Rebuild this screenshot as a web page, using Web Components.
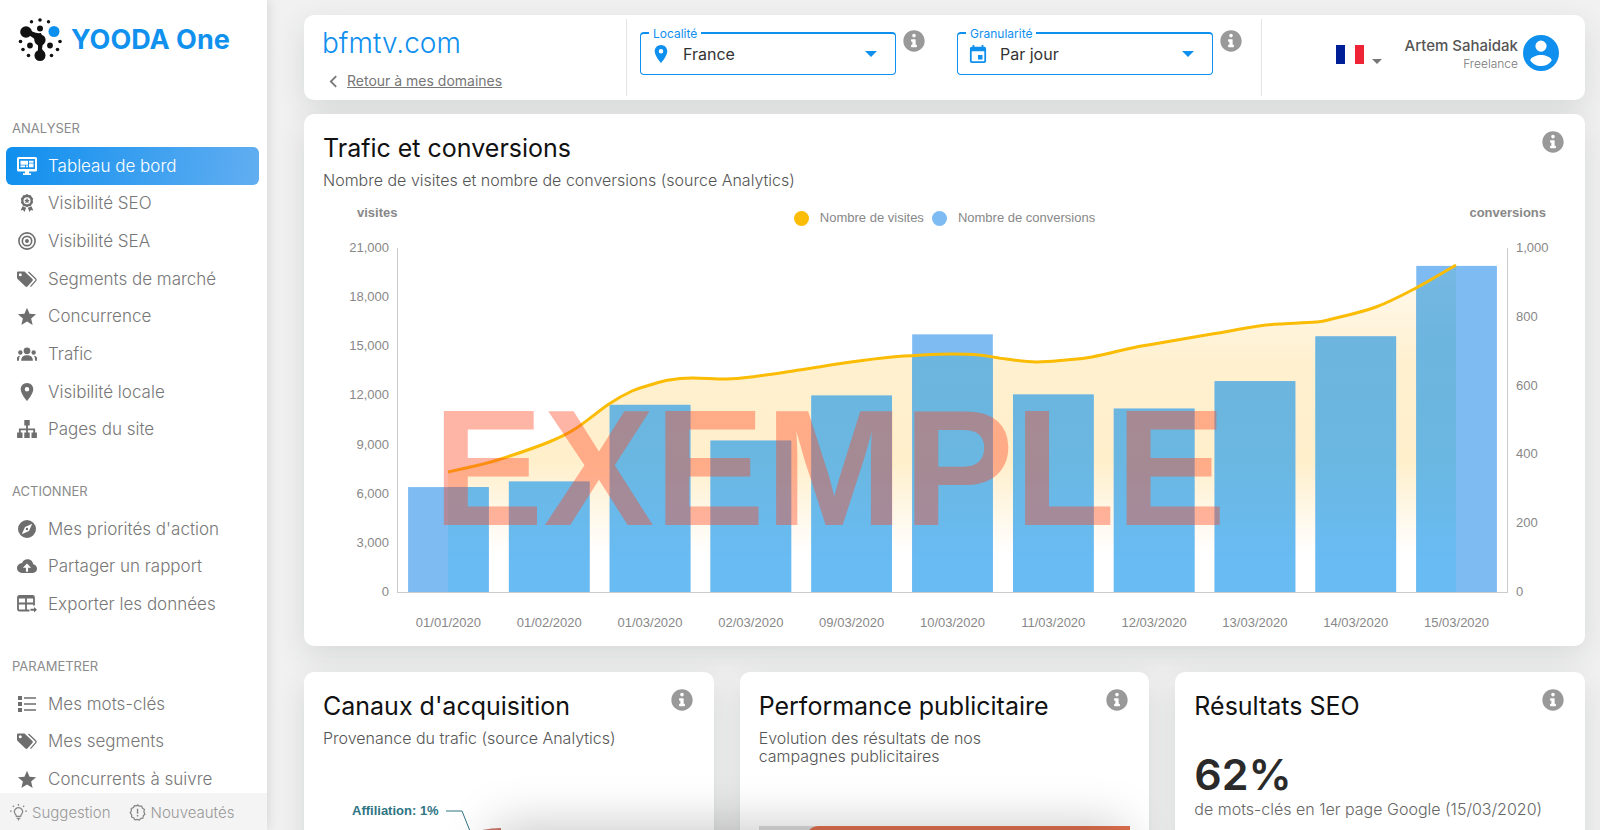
<!DOCTYPE html>
<html lang="fr">
<head>
<meta charset="utf-8">
<title>YOODA One</title>
<style>
html, body { margin: 0; height: 100%; }
body { font-family: Inter, "Open Sans", sans-serif; color: #555; background: #f1f1f1; --blue: #0f8fee; --num: "Liberation Sans", Arial, sans-serif; }
</style>
</head>
<body>
<yooda-app>
  <yooda-sidebar slot="side"></yooda-sidebar>
  <yooda-topbar></yooda-topbar>
  <yooda-card heading="Trafic et conversions" sub="Nombre de visites et nombre de conversions (source Analytics)" class="wide">
    <yooda-combo-chart></yooda-combo-chart>
  </yooda-card>
  <yooda-columns>
    <yooda-card heading="Canaux d'acquisition" sub="Provenance du trafic (source Analytics)"><yooda-pie></yooda-pie></yooda-card>
    <yooda-card heading="Performance publicitaire" sub="Evolution des résultats de nos campagnes publicitaires"><yooda-funnel></yooda-funnel></yooda-card>
    <yooda-card heading="Résultats SEO"><yooda-score value="62%">de mots-clés en 1er page Google (15/03/2020)</yooda-score></yooda-card>
  </yooda-columns>
</yooda-app>

<script>
const ICONS = {
  info: ['0 0 512 512', '<path d="M256 8C119 8 8 119 8 256s111 248 248 248 248-111 248-248S393 8 256 8zm0 80c23 0 42 19 42 42s-19 42-42 42-42-19-42-42 19-42 42-42zm68 300c0 7-5 12-12 12H200c-7 0-12-5-12-12v-32c0-7 5-12 12-12h18v-72h-18c-7 0-12-5-12-12v-32c0-7 5-12 12-12h82c7 0 12 5 12 12v116h18c7 0 12 5 12 12z"/>'],
  board: ['0 0 20 18', '<path fill-rule="evenodd" d="M1.500 0h17q1.500 0 1.500 1.500v11.500q0 1.500-1.500 1.500H12v1.700h2V18H6v-1.800h2V14.500H1.500Q0 14.500 0 13V1.500Q0 0 1.500 0zM2 2v10h16V2z"/><path d="M3.500 3.800h7.500v3.900H3.500zM12 3.800h4.500v2H12zM12 6.500h4.500V10.300H12zM3.500 8.500H8V10.300H3.500zM9 8.500h2V10.300H9z"/>'],
  award: ['0 0 18 20', '<path fill-rule="evenodd" d="M9 0l2 1.100 2.300.2.900 2.100 1.600 1.700-.5 2.300.5 2.200-1.600 1.700-.9 2-2.300.3L9 14.700l-2-1.100-2.300-.3-.9-2L2.200 9.600l.5-2.200-.5-2.300 1.600-1.700.9-2.100L7 1.100zM9 3.500a3.900 3.900 0 1 0 0 7.800 3.900 3.900 0 0 0 0-7.800z"/><path d="M9 4.300l.9 2 2.200.3-1.600 1.500.4 2.200L9 9.200l-1.900 1.100.4-2.200-1.600-1.500 2.200-.3zM4 13.500l4 1.700L6.300 20l-1.700-2.200-2.600.4zM14 13.500l-4 1.700 1.700 4.800 1.700-2.200 2.600.4z"/>'],
  target: ['0 0 20 20', '<g fill="none" stroke="currentColor" stroke-width="1.800"><circle cx="10" cy="10" r="9"/><circle cx="10" cy="10" r="5.200"/></g><circle cx="10" cy="10" r="2.200"/>'],
  tags: ['0 0 20 18', '<path fill-rule="evenodd" d="M0 2.500Q0 1.500 1 1.500h6.500L15.500 9q.8 1-.1 2l-5 5.500q-.9.900-1.900 0L.6 9Q0 8.400 0 7.500zM3.300 3.200a1.500 1.500 0 1 0 0 3 1.500 1.500 0 0 0 0-3z"/><path fill="none" stroke="currentColor" stroke-width="1.200" d="M11.500 2l7.300 7q.6.900 0 1.600l-5.300 6"/>'],
  star: ['2 1 20 21', '<path d="M12 1.800l3 7 7.600.7-5.800 5 1.800 7.500L12 18l-6.600 4 1.800-7.500-5.800-5 7.600-.7z"/>'],
  people: ['1 0 22 16', '<circle cx="12" cy="4.500" r="3.700"/><circle cx="4.700" cy="6.300" r="2.400"/><circle cx="19.300" cy="6.300" r="2.400"/><path d="M5.500 15.500q.2-6 6.500-6t6.500 6zM0 15.500q0-5 4.300-5.500-1.300 2-1.200 5.500zM24 15.500q0-5-4.300-5.500 1.300 2 1.200 5.500z"/>'],
  pin: ['5 2 14 20', '<path d="M12 2C8.100 2 5 5.100 5 9c0 5.300 7 13 7 13s7-7.700 7-13c0-3.900-3.100-7-7-7zm0 9.500a2.500 2.500 0 1 1 0-5 2.500 2.500 0 0 1 0 5z"/>'],
  tree: ['0 0 22 20', '<path d="M8 0h6v6h-6zM0 14h6v6H0zM8 14h6v6H8zM16 14h6v6h-6zM10 6h2v3.500h8V14h-2v-2.700h-6V14h-2v-2.700H4V14H2V9.500h8z"/>'],
  compass: ['0 0 20 20', '<path fill-rule="evenodd" d="M10 0a10 10 0 1 0 0 20 10 10 0 0 0 0-20zM15.800 4.200l-3.600 8-8 3.600 3.600-8zM10 8.700a1.300 1.300 0 1 0 0 2.600 1.300 1.300 0 0 0 0-2.600z"/>'],
  cloud: ['0 0 24 17', '<path fill-rule="evenodd" d="M19.500 6.500C19 2.800 16 .5 12.500.5c-3 0-5.300 1.700-6.400 4.300C2.600 5.200 0 7.800 0 11c0 3.300 2.700 5.800 6 5.800h13c2.800 0 5-2.200 5-5 0-2.700-2-5-4.500-5.300zM12 5.500l5 5h-3.700v5h-2.600v-5H7z"/>'],
  sheet: ['0 0 20 18', '<path fill="none" stroke="currentColor" stroke-width="1.800" d="M12.500 15.500H2.500Q1 15.500 1 14V2.500Q1 1 2.500 1h13Q17 1 17 2.500V10.500M1 2.500h16M1 8.500h16M9 2.500v13"/><path d="M13.500 13.800h3.500v-1.800l3 2.800-3 2.800v-1.800h-3.500z"/>'],
  list: ['0 0 20 18', '<path d="M1 1h4v4H1zM1 7h4v4H1zM1 13h4v4H1zM7 2.200h12v1.600H7zM7 8.200h12v1.600H7zM7 14.200h12v1.600H7z"/>'],
  bulb: ['0 0 20 20', '<g fill="none" stroke="currentColor" stroke-width="1.500"><path d="M7.500 14.500q0-1.500-1.200-2.500a4.700 4.700 0 1 1 7.400 0q-1.200 1-1.200 2.500zM7.800 17h4.400M10 17v2.500M10 0v2M0 8.500h2M18 8.500h2M3.300 2l1.400 1.400M16.700 2l-1.400 1.400"/></g>'],
  news: ['0 0 20 20', '<path fill="none" stroke="currentColor" stroke-width="1.500" stroke-linejoin="round" d="M10 1l2.200 1.500 2.700-.1 1 2.500 2.300 1.500-.7 2.600L18.700 12l-1.900 1.800-.3 2.700-2.700.5L12 19l-2.400-.9-2.600.5-1.500-2.200-2.500-1.100.1-2.700L1.400 10.400 2.800 8l-.2-2.700L5.100 4.200 6.500 1.900l2.600.4z"/><path d="M9.200 5.500h1.700v6H9.200zM9.200 13h1.700v1.800H9.200z"/>'],
  calendar: ['0 0 18 20', '<path fill-rule="evenodd" d="M3 0h2v2h8V0h2v2h1q2 0 2 2v14q0 2-2 2H2q-2 0-2-2V4q0-2 2-2h1zM2 7v11h14V7zM9 11h5v5H9z"/>'],
  user: ['0 0 36 36', '<path fill-rule="evenodd" d="M18 0a18 18 0 1 0 0 36 18 18 0 0 0 0-36zM18 5.500a5.600 5.600 0 1 1 0 11.200 5.600 5.600 0 0 1 0-11.200zM18 31c-4.500 0-8.400-2.200-10.700-5.600C7.400 21.900 14.400 20 18 20s10.600 1.900 10.700 5.400A13 13 0 0 1 18 31z"/>'],
  back: ['0 0 10 14', '<path fill="none" stroke="currentColor" stroke-width="2" d="M8 1L2 7l6 6"/>'],
  caret: ['0 0 10 5', '<path d="M0 0h10L5 5z"/>']
};

class Base extends HTMLElement {
  connectedCallback() {
    if (this.shadowRoot) return;
    this.attachShadow({ mode: 'open' }).innerHTML = this.view();
  }
}
const define = (name, view) => customElements.define(name, class extends Base { view() { return view(this); } });

define('yooda-icon', el => {
  const [box, body] = ICONS[el.getAttribute('name')];
  return `<style>:host{display:inline-flex;flex:none}svg{width:100%;height:100%;fill:currentColor}</style>
  <svg viewBox="${box}" aria-hidden="true">${body}</svg>`;
});

define('yooda-app', () => `<style>
  :host{display:grid;grid-template-columns:267px minmax(0,1fr);height:100vh;overflow:hidden}
  ::slotted(yooda-sidebar){z-index:1}
  main{overflow:auto;scrollbar-width:none;padding:15px 15px 26px 37px}
  ::slotted(.wide){margin:14px 0 26px}
  .toast{position:fixed;left:31%;right:30%;top:100%;height:60px;border-radius:8px;background:#fff;box-shadow:0 0 50px 4px rgba(0,0,0,.22)}
  </style><slot name="side"></slot><main><slot></slot></main><div class="toast"></div>`);

define('yooda-columns', () => `<style>
  :host{display:grid;grid-template-columns:repeat(3,minmax(0,1fr));gap:26px}</style><slot></slot>`);

define('yooda-logo', () => `<style>
  :host{display:flex;align-items:center;gap:9px;color:#1191ee;font-size:27px;line-height:30px;font-weight:700}
  svg{width:44px;height:44px;flex:none}</style>
  <svg viewBox="0 0 44 44" aria-hidden="true"><g fill="#111"><path d="M7 12L22 22M22 20V38" stroke="#111" stroke-width="4"/>
  <path d="M10 10q5 6 13 5l3 8h-9q-1-7-9-8zM20 24h5l-1 7 3 4h-9l3-4z"/>
  <circle cx="8" cy="14" r="5.800"/><circle cx="22" cy="22" r="5.600"/><circle cx="22" cy="37.500" r="5.500"/>
  <circle cx="22" cy="10.500" r="3"/><circle cx="12" cy="27.500" r="2.900"/><circle cx="32" cy="27.500" r="2.900"/>
  <circle cx="22" cy="2" r="1.800"/><circle cx="13.500" cy="3.700" r="1.700"/><circle cx="30.500" cy="3.700" r="1.700"/>
  <circle cx="2.500" cy="23.500" r="1.800"/><circle cx="42" cy="23.500" r="1.800"/><circle cx="5" cy="31.500" r="1.800"/><circle cx="39.500" cy="31.500" r="1.800"/>
  <circle cx="10.500" cy="37.500" r="1.800"/><circle cx="33.500" cy="37.500" r="1.800"/></g><circle cx="36" cy="13.500" r="5.500" fill="#0c90ee"/></svg>
  <span>YOODA One</span>`);

const MENU = [
  ['ANALYSER', [['board', 'Tableau de bord'], ['award', 'Visibilité SEO'], ['target', 'Visibilité SEA'], ['tags', 'Segments de marché'], ['star', 'Concurrence'], ['people', 'Trafic'], ['pin', 'Visibilité locale'], ['tree', 'Pages du site']]],
  ['ACTIONNER', [['compass', "Mes priorités d'action"], ['cloud', 'Partager un rapport'], ['sheet', 'Exporter les données']]],
  ['PARAMETRER', [['list', 'Mes mots-clés'], ['tags', 'Mes segments'], ['star', 'Concurrents à suivre']]]
];
define('yooda-sidebar', () => `<style>
  :host{display:flex;flex-direction:column;min-height:0;background:#fff;box-shadow:0 0 12px rgba(0,0,0,.14)}
  yooda-logo{padding:18px 18px 47px}
  nav{flex:1;min-height:0;overflow:auto;scrollbar-width:none;display:flex;flex-direction:column;gap:24px}
  h2{margin:0;padding-left:12px;font-size:13px;font-weight:400;line-height:38px;color:#8b8b8b}
  ul{list-style:none;margin:0;padding:0 8px 0 6px;display:grid;grid-auto-rows:1fr}
  .n8{height:301px}.n3{height:113px}
  a{display:flex;align-items:center;gap:11px;height:100%;box-sizing:border-box;padding-left:11px;font-size:17px;font-weight:300;color:#777;text-decoration:none;white-space:nowrap;border-radius:6px}
  a yooda-icon{width:20px;height:18px;color:#6e6e6e}
  a.on{background:linear-gradient(100deg,#0f8fee,#62aef1);color:#fff}
  a.on yooda-icon{color:#fff}
  footer{flex:none;display:flex;align-items:center;gap:18px;height:37px;padding:2px 0 0 10px;box-sizing:border-box;background:#f4f4f4}
  footer button{display:flex;align-items:center;gap:5px;border:0;padding:0;background:none;font:300 15px Inter,sans-serif;color:#999}
  footer yooda-icon{width:17px;height:17px;color:#888}
  </style><yooda-logo></yooda-logo><nav>${MENU.map(([t, items]) => `<section><h2>${t}</h2><ul class="n${items.length}">${items.map(([i, l]) =>
    `<li><a href="#" ${i === 'board' ? 'class="on" aria-current="page"' : ''}><yooda-icon name="${i}"></yooda-icon>${l}</a></li>`).join('')}</ul></section>`).join('')}</nav>
  <footer><button type="button"><yooda-icon name="bulb"></yooda-icon>Suggestion</button><button type="button"><yooda-icon name="news"></yooda-icon>Nouveautés</button></footer>`);

define('yooda-select', el => `<style>
  :host{display:flex;align-items:flex-start;gap:7px;flex:1;min-width:0}
  .field{position:relative;flex:1;min-width:0;display:flex;align-items:center;gap:13px;height:43px;box-sizing:border-box;border:1px solid var(--blue);border-top-width:2px;border-radius:4px;padding:0 18px 0 11px;color:var(--blue)}
  label{position:absolute;top:-8px;left:8px;padding:0 4px;background:#fff;font-size:12px;line-height:16px}
  .field yooda-icon{width:18px;height:18px}
  select{appearance:none;flex:1;min-width:0;border:0;outline:0;background:none;padding:0;font:400 16px Inter,sans-serif;color:#333}
  .field .caret{width:12px;height:6px}
  button{border:0;padding:0;margin-top:-2px;background:none;display:flex;color:#999}
  button yooda-icon{width:22px;height:22px}
  </style><div class="field"><label for="s">${el.getAttribute('label')}</label><yooda-icon name="${el.getAttribute('icon')}"></yooda-icon>
  <select id="s"><option>${el.getAttribute('value')}</option></select><yooda-icon class="caret" name="caret"></yooda-icon></div>
  <button type="button" aria-label="Information"><yooda-icon name="info"></yooda-icon></button>`);

define('yooda-topbar', () => `<style>
  :host{display:grid;grid-template-columns:322px minmax(0,1fr) 323px;height:85px;padding:4px 0;box-sizing:border-box;border-radius:10px;background:#fff;box-shadow:0 10px 30px rgba(30,50,45,.12)}
  .site{padding:8px 0 0 18px}
  h1{margin:0;font-size:28px;line-height:32px;font-weight:300;color:var(--blue)}
  a{display:flex;align-items:center;gap:9px;margin-top:12px;padding-left:7px;font-size:14px;line-height:20px;color:#777}
  a yooda-icon{width:9px;height:13px}
  .filters{display:flex;gap:32px;padding:13px 19px 0 13px;border:solid #e4e4e4;border-width:0 1px 0 1px}
  .me{display:flex;align-items:flex-start;justify-content:flex-end;gap:5px;padding:16px 26px 0 0}
  .lang{display:flex;align-items:flex-end;gap:8px;border:0;padding:0;margin:10px 18px 0 0;background:none;color:#777}
  .flag{width:28px;height:19px;background:linear-gradient(90deg,#001e96 33%,#fff 33% 67%,#ee2436 67%)}
  .lang yooda-icon{width:10px;height:5px}
  .who{padding-top:1px;text-align:right;font-size:15px;line-height:20px;font-weight:500;color:#555}
  .who small{display:block;font-size:12px;line-height:16px;font-weight:300;color:#777}
  .me > yooda-icon{width:36px;height:36px;color:var(--blue)}
  </style>
  <div class="site"><h1>bfmtv.com</h1><a href="#"><yooda-icon name="back"></yooda-icon>Retour à mes domaines</a></div>
  <div class="filters"><yooda-select label="Localité" icon="pin" value="France"></yooda-select><yooda-select label="Granularité" icon="calendar" value="Par jour"></yooda-select></div>
  <div class="me"><button class="lang" type="button" aria-label="Langue"><span class="flag"></span><yooda-icon name="caret"></yooda-icon></button>
  <div class="who">Artem Sahaidak<small>Freelance</small></div><yooda-icon name="user"></yooda-icon></div>`);

define('yooda-card', el => `<style>
  :host{display:block;position:relative;box-sizing:border-box;padding:19px 19px 15px;border-radius:10px;background:#fff;box-shadow:0 10px 30px rgba(30,50,45,.12)}
  header{display:flex;justify-content:space-between;align-items:flex-start}
  h2{margin:0;font-size:25px;line-height:30px;font-weight:400;color:#111}
  p{margin:8px 0 0;font-size:16px;line-height:18px;font-weight:300;color:#555}
  header > div{flex:1;min-width:0}
  button{flex:none;border:0;padding:0;margin:-2px 2px 0 0;background:none;display:flex;color:#999}
  yooda-icon{width:22px;height:22px}
  :host(:not(.wide)) p{max-width:312px}
  </style><header><div><h2>${el.getAttribute('heading')}</h2>${el.hasAttribute('sub') ? `<p>${el.getAttribute('sub')}</p>` : ''}</div>
  <button type="button" aria-label="Information"><yooda-icon name="info"></yooda-icon></button></header><slot></slot>`);

const DAYS = [['01/01/2020', 305], ['01/02/2020', 321], ['01/03/2020', 544], ['02/03/2020', 440], ['09/03/2020', 571], ['10/03/2020', 749], ['11/03/2020', 574], ['12/03/2020', 533], ['13/03/2020', 613], ['14/03/2020', 743], ['15/03/2020', 948]];
const CURVE = [[50, 224], [81, 217], [106, 210], [151, 194], [177, 181], [211, 156], [234, 143], [252, 137], [271, 132], [294, 130], [328, 131], [353, 129], [401, 122], [453, 114], [494, 109], [524, 107], [554, 106], [581, 107], [608, 111], [638, 114], [668, 112], [694, 109], [734, 100], [756, 96], [814, 86], [861, 78], [881, 76], [918, 74], [934, 71], [978, 59], [1018, 40], [1058, 17]];
/* Catmull-Rom spline written as cubic segments. */
const spline = p => p.reduce((d, q, i) => {
  if (!i) return `M${q}`;
  const a = p[i - 2] || p[i - 1], b = p[i - 1], c = p[i + 1] || q;
  return `${d}C${b[0] + (q[0] - a[0]) / 6} ${b[1] + (q[1] - a[1]) / 6} ${q[0] - (c[0] - b[0]) / 6} ${q[1] - (c[1] - b[1]) / 6} ${q}`;
}, '');
define('yooda-combo-chart', () => {
  const line = spline(CURVE), area = `${line}V344H50Z`, step = 1109 / 11;
  const bars = DAYS.map(([, v], i) => `<rect x="${(i + .1) * step}" y="${344 - v * .344}" width="${step * .8}" height="${v * .344}"/>`).join('');
  return `<style>
  :host{display:grid;grid-template-columns:75px minmax(0,1fr) 59px;font:13px/16px var(--num);color:#888}
  .head{grid-column:1/-1;display:grid;grid-template-columns:1fr auto 1fr;align-items:start;padding:16px 20px 22px}
  .head b:first-child{padding-left:14px}
  .head b:last-child{text-align:right}
  .legend{display:flex;align-items:center;gap:8px;padding-top:5px}
  .legend span{display:flex;align-items:center;gap:11px}
  .legend i{width:15px;height:15px;border-radius:50%}
  .y{display:flex;flex-direction:column;justify-content:space-between;margin:-8px 0;text-align:right;padding-right:9px}
  .y.r{text-align:left;padding:0 0 0 9px}
  .plot{position:relative;height:344px;border:solid #ccc;border-width:0 1px 1px;margin:0 -1px -1px}
  svg{display:block;width:100%;height:100%;overflow:visible}
  .mark{position:absolute;inset:0;display:flex;align-items:center;justify-content:center;padding:96px 246px 0 0;box-sizing:border-box;font:700 166px/160px var(--num);color:rgba(255,70,33,.4)}
  .x{grid-column:2;display:flex;padding-top:23px}
  .x span{flex:1;text-align:center}
  </style>
  <div class="head"><b>visites</b><div class="legend"><span><i style="background:#fbbc05"></i>Nombre de visites</span><span><i style="background:#7dbbf2"></i>Nombre de conversions</span></div><b>conversions</b></div>
  <div class="y">${[21, 18, 15, 12, 9, 6, 3, 0].map(n => `<span>${n ? n + ',000' : 0}</span>`).join('')}</div>
  <div class="plot"><svg viewBox="0 0 1109 344" preserveAspectRatio="none" aria-hidden="true">
  <defs><linearGradient id="sand" gradientUnits="userSpaceOnUse" x1="0" y1="17" x2="0" y2="344"><stop offset="0" stop-color="#fffaf0"/><stop offset=".3" stop-color="#fff0cf"/><stop offset=".6" stop-color="#ffefcb"/><stop offset=".88" stop-color="#fff"/></linearGradient>
  <linearGradient id="sea" gradientUnits="userSpaceOnUse" x1="0" y1="17" x2="0" y2="344"><stop offset="0" stop-color="#75b8e4"/><stop offset=".25" stop-color="#6cb5de"/><stop offset=".6" stop-color="#6ab7e1"/><stop offset=".9" stop-color="#68bbf3"/></linearGradient>
  <clipPath id="under"><path d="${area}"/></clipPath></defs>
  <path d="${area}" fill="url(#sand)"/><g fill="#7ebbf2">${bars}</g><g fill="url(#sea)" clip-path="url(#under)">${bars}</g>
  <path d="${line}" fill="none" stroke="#fbbc05" stroke-width="3" vector-effect="non-scaling-stroke"/></svg>
  <div class="mark">EXEMPLE</div></div>
  <div class="y r">${['1,000', 800, 600, 400, 200, 0].map(n => `<span>${n}</span>`).join('')}</div>
  <div class="x">${DAYS.map(([d]) => `<span>${d}</span>`).join('')}</div>`;
});

define('yooda-pie', () => `<style>:host{display:block;padding:55px 0 0 29px}
  svg{display:block;width:300px;height:160px;overflow:visible}
  text{font:700 13px "Liberation Sans",sans-serif;fill:#2f7484}</style>
  <svg viewBox="0 0 300 160" role="img"><text x="0" y="13">Affiliation: 1%</text>
  <path d="M94 9h16l8 20" fill="none" stroke="#2f7484"/>
  <path d="M130 28q10-2 19-2v60z" fill="#c97468"/></svg>`);

define('yooda-funnel', () => `<style>:host{display:block;padding:61px 0 0}
  div{background:#dcdcdc}span{display:block;height:60px;margin-left:46px;border-radius:14px 0 0 0;background:#e0704f}</style><div><span></span></div>`);

define('yooda-score', el => `<style>:host{display:block;padding:29px 0 0;font-size:16px;line-height:20px;font-weight:300;color:#666}
  b{display:block;font-size:43px;line-height:48px;font-weight:600;color:#2a2a2a;padding-bottom:1px}</style><b>${el.getAttribute('value')}</b><slot></slot>`);
</script>
</body>
</html>
